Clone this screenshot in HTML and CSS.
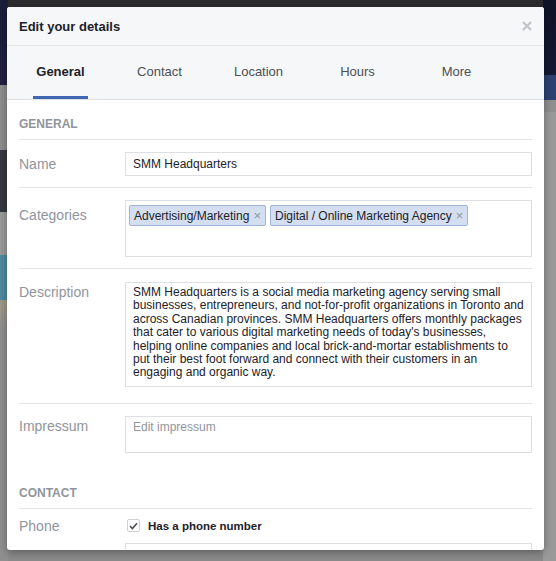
FILE: index.html
```html
<!DOCTYPE html>
<html>
<head>
<meta charset="utf-8">
<link rel="stylesheet" href="styles.css">
</head>
<body>
<div class="modal">
  <div class="head">
    <span class="title">Edit your details</span>
    <svg class="close" width="10" height="10" viewBox="0 0 10 10"><path d="M1 1L9 9M9 1L1 9" stroke="#bec2c9" stroke-width="2"/></svg>
  </div>
  <div class="tabs">
    <div class="tab active"><span>General</span></div>
    <div class="tab"><span>Contact</span></div>
    <div class="tab"><span>Location</span></div>
    <div class="tab"><span>Hours</span></div>
    <div class="tab"><span>More</span></div>
  </div>
  <div class="body">
    <div class="section">GENERAL</div>
    <div class="row row-name">
      <div class="label">Name</div>
      <div class="field"><div class="input">SMM Headquarters</div></div>
    </div>
    <div class="row row-cat">
      <div class="label">Categories</div>
      <div class="field">
        <div class="tokens">
          <span class="token">Advertising/Marketing<i>×</i></span>
          <span class="token">Digital / Online Marketing Agency<i>×</i></span>
        </div>
      </div>
    </div>
    <div class="row row-desc">
      <div class="label">Description</div>
      <div class="field">
        <div class="textarea desc">SMM Headquarters is a social media marketing agency serving small<br>businesses, entrepreneurs, and not-for-profit organizations in Toronto and<br>across Canadian provinces. SMM Headquarters offers monthly packages<br>that cater to various digital marketing needs of today's businesses,<br>helping online companies and local brick-and-mortar establishments to<br>put their best foot forward and connect with their customers in an<br>engaging and organic way.</div>
      </div>
    </div>
    <div class="row row-imp">
      <div class="label">Impressum</div>
      <div class="field"><div class="textarea imp">Edit impressum</div></div>
    </div>
    <div class="section">CONTACT</div>
    <div class="row row-phone">
      <div class="label">Phone</div>
      <div class="field">
        <div class="check">
          <span class="box"><svg width="9" height="8" viewBox="0 0 9 8"><path d="M1 4.2L3.4 6.5L8 1.2" fill="none" stroke="#4b4f56" stroke-width="1.6"/></svg></span>
          <span class="check-text">Has a phone number</span>
        </div>
        <div class="input phone">6477858366</div>
      </div>
    </div>
  </div>
</div>
</body>
</html>
```
FILE: styles.css
```css
html, body {
  margin: 0;
  padding: 0;
}
body {
  width: 556px;
  height: 561px;
  overflow: hidden;
  font-family: "Liberation Sans", Arial, sans-serif;
  background:
    linear-gradient(to bottom, #1b1d3b 0, #231f45 85px, #8e8e8e 85px, #8e8e8e 150px, #35383f 150px, #35383f 212px, #9b9b9b 212px, #9b9b9b 255px, #4f8aa0 255px, #4f8aa0 300px, #a09a88 300px, #8f8f8f 330px) left top / 8px 100% no-repeat,
    linear-gradient(to bottom, #0f1328 0, #141a35 75px, #2c4270 75px, #2c4270 100px, #8f8f8f 100px, #8f8f8f 112px, #9a9a9a 112px) right top / 13px 100% no-repeat,
    linear-gradient(to bottom, #2c2c2f 0, #2c2c2f 7px, #8a8a8a 7px) top left / 100% 100% no-repeat;
}
.modal {
  margin: 7px 0 0 7px;
  width: 537px;
  height: 543px;
  background: #fff;
  overflow: hidden;
  border-radius: 3px;
  box-shadow: 0 2px 8px rgba(0, 0, 0, 0.35);
}
.head {
  height: 38px;
  background: #f6f7f9;
  border-bottom: 1px solid #e5e5e5;
  display: flex;
  align-items: center;
  justify-content: space-between;
  padding: 0 12px 0 12px;
}
.title {
  font-size: 13px;
  font-weight: bold;
  color: #1d2129;
}
.close {
  display: block;
}
.tabs {
  height: 53px;
  background: #f6f7f9;
  border-bottom: 1px solid #dddfe2;
  display: flex;
  padding-left: 4px;
}
.tab {
  width: 99px;
  height: 53px;
  display: flex;
  justify-content: center;
  align-items: flex-end;
  font-size: 13px;
  color: #4b4f56;
}
.tab span {
  line-height: 16px;
  padding: 0 3px 16px;
  border-bottom: 3px solid transparent;
}
.tab.active span {
  font-weight: bold;
  color: #1d2129;
  border-bottom-color: #4267b2;
}
.body {
  padding: 0 12px;
}
.section {
  font-size: 12px;
  font-weight: bold;
  color: #90949c;
  line-height: 16px;
  padding: 16px 0 7px;
  border-bottom: 1px solid #e5e5e5;
}
.row {
  display: flex;
  border-bottom: 1px solid #e5e5e5;
}
.label {
  width: 106px;
  flex: none;
  font-size: 14px;
  line-height: 16px;
  color: #90949c;
}
.field {
  flex: 1;
}
.input {
  height: 22px;
  border: 1px solid #dddfe2;
  padding: 0 7px;
  font-size: 12px;
  line-height: 22px;
  color: #1d2129;
}
.row-name {
  padding: 12px 0 11px;
}
.row-name .label {
  padding-top: 4px;
}
.row-cat {
  padding: 12px 0 11px;
}
.row-cat .label {
  padding-top: 7px;
}
.tokens {
  height: 49px;
  border: 1px solid #dddfe2;
  padding: 4px 3px 2px;
  display: flex;
  align-items: flex-start;
  gap: 4px;
}
.token {
  display: inline-flex;
  align-items: center;
  height: 19px;
  padding: 0 4px;
  gap: 4px;
  background: #d3def0;
  border: 1px solid #9fb4d9;
  border-radius: 2px;
  font-size: 12px;
  color: #1d2129;
}
.token i {
  font-style: normal;
  color: #8d949e;
  font-size: 13px;
  line-height: 12px;
}
.row-desc {
  padding: 13px 0 16px;
}
.row-desc .label {
  padding-top: 2px;
}
.textarea {
  border: 1px solid #dddfe2;
  padding: 3px 7px 2px;
  font-size: 12px;
  line-height: 14px;
  color: #1d2129;
  white-space: nowrap;
}
.textarea.desc {
  line-height: 13.4px;
  padding: 3px 7px 6px;
}
.row-imp {
  padding: 12px 0 16px;
  border-bottom: none;
}
.row-imp .label {
  padding-top: 2px;
}
.textarea.imp {
  height: 30px;
  color: #90949c;
}
.row-phone {
  padding-top: 9px;
  border-bottom: none;
}
.check {
  display: flex;
  align-items: center;
  height: 16px;
  padding-left: 2px;
  gap: 8px;
}
.box {
  width: 11px;
  height: 11px;
  border: 1px solid #ccd0d5;
  border-radius: 2px;
  display: flex;
  align-items: center;
  justify-content: center;
  background: #fff;
}
.box svg {
  display: block;
}
.check-text {
  font-size: 11.5px;
  font-weight: bold;
  color: #1d2129;
}
.input.phone {
  margin-top: 9px;
  color: #1d2129;
}
```
